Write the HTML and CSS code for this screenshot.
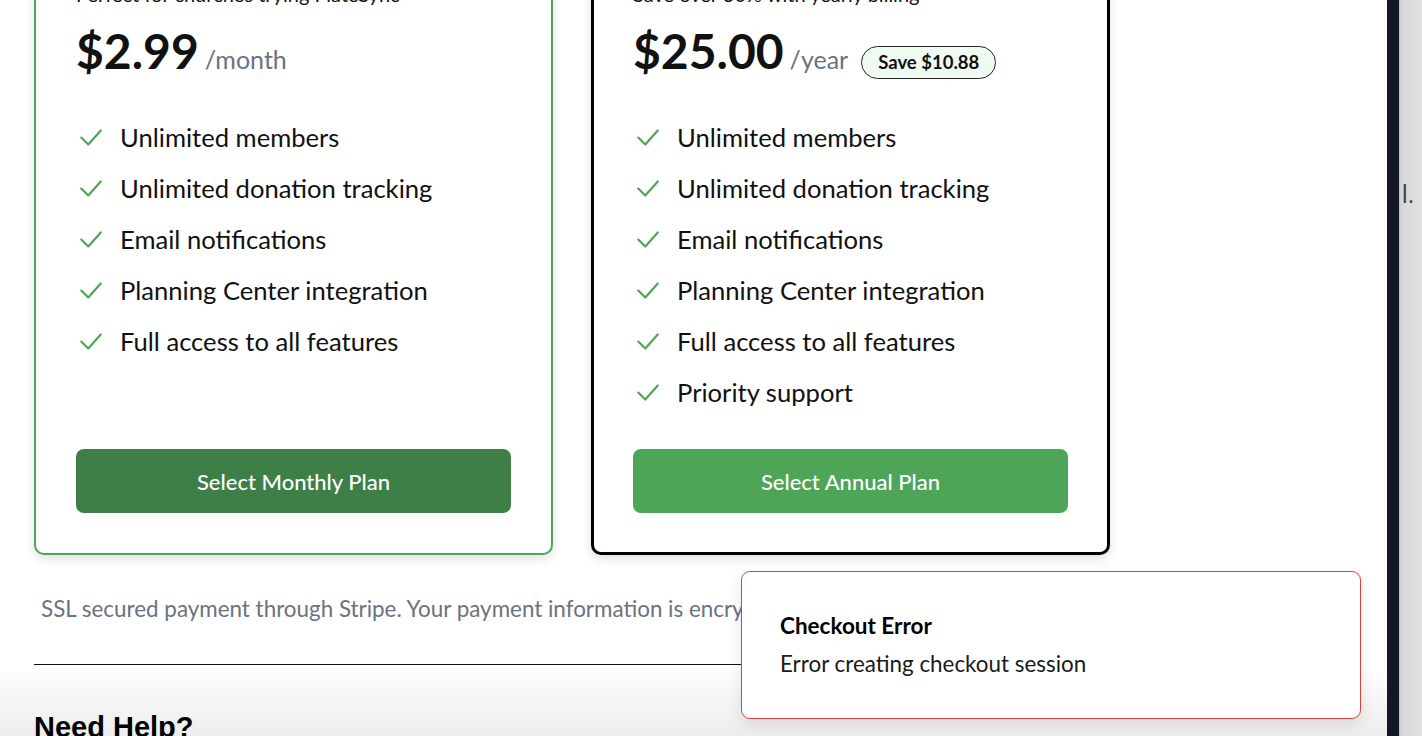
FILE: index.html
```html
<!DOCTYPE html>
<html lang="en">
<head>
<meta charset="utf-8">
<title>PlateSync Pricing</title>
<link rel="stylesheet" href="styles.css">
</head>
<body>
<div class="shell">
  <main class="main">
    <div class="content">
      <div class="plans">
        <section class="card card-monthly">
          <h2 class="plan-name">Monthly</h2>
          <p class="plan-sub">Perfect for churches trying PlateSync</p>
          <div class="price-row">
            <span class="price">$2.99</span>
            <span class="period">/month</span>
          </div>
          <ul class="features">
            <li><svg class="check" viewBox="0 0 24 24"><path d="M3 12.5l6.5 6.5L21 6"/></svg><span>Unlimited members</span></li>
            <li><svg class="check" viewBox="0 0 24 24"><path d="M3 12.5l6.5 6.5L21 6"/></svg><span>Unlimited donation tracking</span></li>
            <li><svg class="check" viewBox="0 0 24 24"><path d="M3 12.5l6.5 6.5L21 6"/></svg><span>Email notifications</span></li>
            <li><svg class="check" viewBox="0 0 24 24"><path d="M3 12.5l6.5 6.5L21 6"/></svg><span>Planning Center integration</span></li>
            <li><svg class="check" viewBox="0 0 24 24"><path d="M3 12.5l6.5 6.5L21 6"/></svg><span>Full access to all features</span></li>
          </ul>
          <button class="btn btn-dark">Select Monthly Plan</button>
        </section>
        <section class="card card-annual">
          <h2 class="plan-name">Annual</h2>
          <p class="plan-sub">Save over 30% with yearly billing</p>
          <div class="price-row">
            <span class="price">$25.00</span>
            <span class="period">/year</span>
            <span class="badge">Save $10.88</span>
          </div>
          <ul class="features">
            <li><svg class="check" viewBox="0 0 24 24"><path d="M3 12.5l6.5 6.5L21 6"/></svg><span>Unlimited members</span></li>
            <li><svg class="check" viewBox="0 0 24 24"><path d="M3 12.5l6.5 6.5L21 6"/></svg><span>Unlimited donation tracking</span></li>
            <li><svg class="check" viewBox="0 0 24 24"><path d="M3 12.5l6.5 6.5L21 6"/></svg><span>Email notifications</span></li>
            <li><svg class="check" viewBox="0 0 24 24"><path d="M3 12.5l6.5 6.5L21 6"/></svg><span>Planning Center integration</span></li>
            <li><svg class="check" viewBox="0 0 24 24"><path d="M3 12.5l6.5 6.5L21 6"/></svg><span>Full access to all features</span></li>
            <li><svg class="check" viewBox="0 0 24 24"><path d="M3 12.5l6.5 6.5L21 6"/></svg><span>Priority support</span></li>
          </ul>
          <button class="btn btn-light">Select Annual Plan</button>
        </section>
      </div>
      <p class="secure">SSL secured payment through Stripe. Your payment information is encrypted and secure.</p>
      <hr class="divider">
      <h2 class="help">Need Help?</h2>
    </div>
    <div class="toast" role="alert">
      <div class="toast-title">Checkout Error</div>
      <div class="toast-msg">Error creating checkout session</div>
    </div>
  </main>
  <div class="strip"></div>
  <div class="behind"><span class="behind-text">l.</span></div>
</div>
</body>
</html>
```
FILE: styles.css
```css
* { box-sizing: border-box; }
html, body { margin: 0; padding: 0; height: 100%; overflow: hidden; }
body {
  font-family: Lato, "Open Sans", sans-serif;
  color: #111;
  background: #fff;
}
.shell {
  display: flex;
  height: 736px;
  width: 1422px;
}
.main {
  position: relative;
  width: 1387px;
  flex: 0 0 1387px;
  overflow: hidden;
  background: linear-gradient(to bottom, #fff 0, #fff 668px, #f6f6f6 700px, #ededed 736px);
}
.content {
  margin-top: -106px;
  padding-left: 34px;
  width: 1110px;
}
.plans {
  display: grid;
  grid-template-columns: 519px 519px;
  column-gap: 38px;
}
.card {
  display: flex;
  flex-direction: column;
  background: #fff;
  border-radius: 10px;
  padding: 40px 40px 40px;
  box-shadow: 0 4px 10px rgba(0,0,0,0.12);
}
.card-monthly { border: 2px solid #4ea457; }
.card-annual { border: 3px solid #000; padding: 39px 39px 39px; }
.plan-name {
  margin: 0 0 8px;
  font-size: 28px;
  line-height: 36px;
  font-weight: 700;
}
.plan-sub {
  margin: 0 0 19px;
  font-size: 20px;
  line-height: 28px;
}
.price-row {
  display: flex;
  align-items: baseline;
  height: 48px;
}
.price {
  font-size: 48px;
  line-height: 48px;
  font-weight: 700;
}
.period {
  font-size: 25px;
  line-height: 24px;
  color: #6b7280;
  margin-left: 6px;
}
.badge {
  margin-left: 13px;
  font-size: 18.5px;
  font-weight: 700;
  line-height: 31px;
  padding: 0 16px;
  border: 1px solid #222;
  border-radius: 999px;
  background: #effbf1;
}
.features {
  list-style: none;
  margin: 44px 0 39px;
  padding: 0;
  display: flex;
  flex-direction: column;
  gap: 15px;
}
.features li {
  display: flex;
  align-items: center;
  font-size: 25.6px;
  line-height: 36px;
}
.check {
  width: 26px;
  height: 26px;
  margin: 0 16px 0 2px;
  fill: none;
  stroke: #4ea457;
  stroke-width: 2;
  stroke-linecap: round;
  stroke-linejoin: round;
  flex: none;
}
.btn {
  margin-top: auto;
  height: 64px;
  width: 435px;
  border: 0;
  border-radius: 8px;
  color: #fff;
  font-family: Lato, sans-serif;
  font-size: 22px;
  font-weight: 500;
}
.btn-dark { background: #3e7f47; }
.btn-light { background: #4ea457; }
.secure {
  margin: 40px 0 0;
  padding-left: 7px;
  font-size: 22.4px;
  line-height: 28px;
  color: #6b7280;
  white-space: nowrap;
}
.divider {
  margin: 41px 0 0;
  border: 0;
  border-top: 1px solid #111;
  width: 1076px;
}
.help {
  margin: 45px 0 0;
  font-family: "Liberation Sans", Arial, sans-serif;
  font-size: 29px;
  font-weight: 700;
  line-height: 34px;
  color: #000;
}
.toast {
  position: absolute;
  right: 26px;
  bottom: 17px;
  width: 620px;
  height: 148px;
  background: #fff;
  border: 1px solid #d9443c;
  border-radius: 9px;
  padding: 40px 38px;
  box-shadow: 0 6px 16px rgba(0,0,0,0.10);
  display: flex;
  flex-direction: column;
  gap: 10px;
}
.toast-title {
  font-size: 22.5px;
  line-height: 28px;
  font-weight: 700;
  color: #000;
}
.toast-msg {
  font-size: 22.4px;
  line-height: 28px;
  color: #1a1a1a;
}
.strip {
  flex: 0 0 12px;
  background: #121826;
}
.behind {
  flex: 1;
  background: linear-gradient(to right, #bdbdbd 0, #d6d6d6 2px, #e2e2e2 100%);
  padding-top: 180px;
  padding-left: 3px;
}
.behind-text {
  font-family: "Liberation Sans", Arial, sans-serif;
  font-size: 25px;
  color: #444;
}
```
